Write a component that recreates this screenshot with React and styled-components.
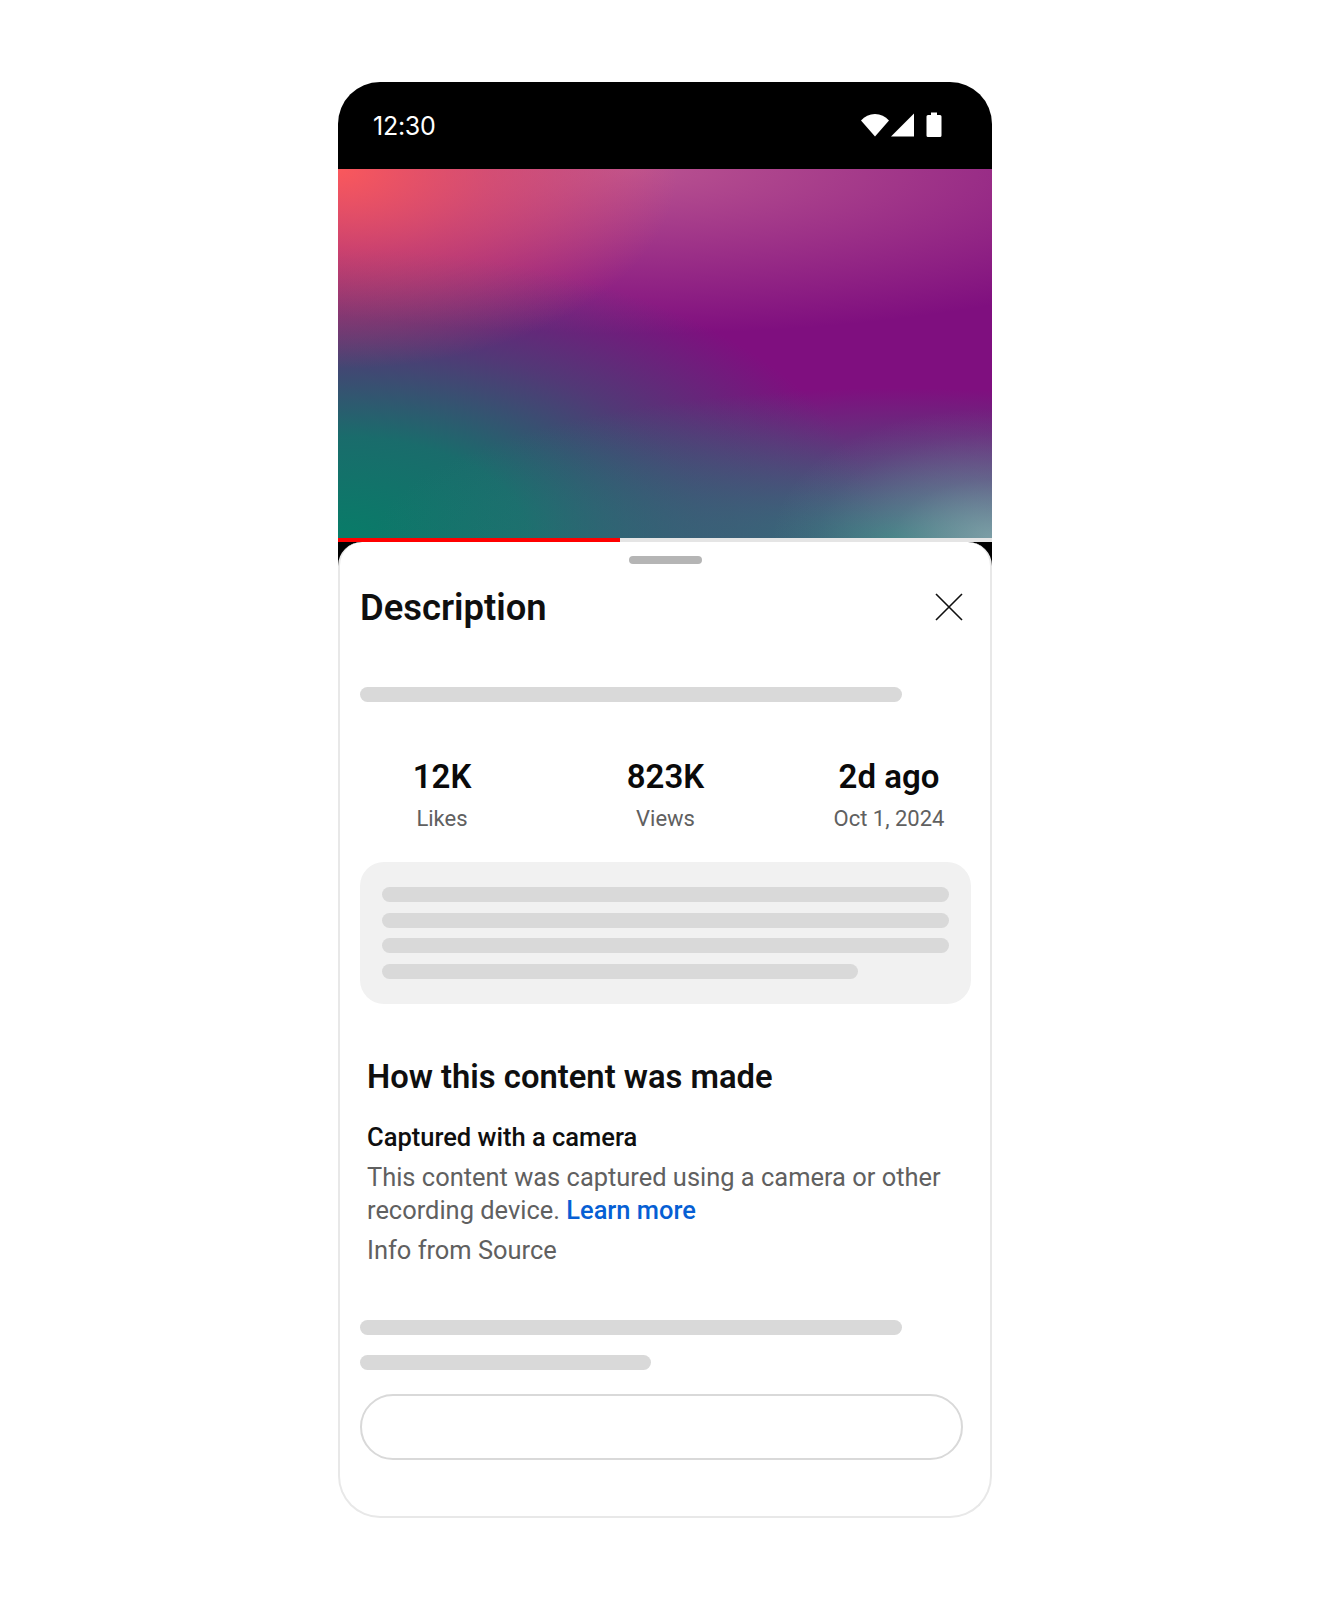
import React from 'react';
import styled, { createGlobalStyle } from 'styled-components';

const GlobalStyle = createGlobalStyle`
  html, body { margin: 0; padding: 0; background: #fff; }
  body { font-family: Roboto, "Liberation Sans", sans-serif; }
  * { box-sizing: border-box; }
`;

const Page = styled.div`
  width: 1331px;
  height: 1600px;
  padding: 82px 0 0 338px;
`;

const Phone = styled.div`
  width: 654px;
  height: 1436px;
  display: flex;
  flex-direction: column;
`;

const StatusBar = styled.div`
  height: 87px;
  flex: none;
  background: #000;
  border-radius: 42px 42px 0 0;
  padding: 0 50px 0 35px;
  display: flex;
  align-items: center;
  justify-content: space-between;
  color: #fff;
`;

const Clock = styled.span`
  font-family: Inter, sans-serif;
  font-size: 25px;
  letter-spacing: -0.25px;
`;

const StatusIcons = styled.div`
  display: flex;
  align-items: center;
  margin-bottom: 2px;
`;

const Video = styled.div`
  height: 369px;
  flex: none;
  background:
    radial-gradient(ellipse 220px 130px at 100% 100%, rgba(165, 200, 195, 0.6) 0%, rgba(165, 200, 195, 0.22) 45%, rgba(165, 200, 195, 0.05) 80%, rgba(165, 200, 195, 0) 100%),
    radial-gradient(ellipse 520px 150px at 85% 100%, rgba(40, 125, 120, 0.9) 0%, rgba(40, 125, 120, 0.45) 50%, rgba(40, 125, 120, 0) 100%),
    radial-gradient(ellipse 340px 200px at 0% 0%, rgba(250, 88, 92, 1) 0%, rgba(250, 88, 92, 0.5) 45%, rgba(250, 88, 92, 0) 100%),
    radial-gradient(ellipse 540px 290px at 0% 100%, rgba(8, 124, 104, 1) 0%, rgba(8, 124, 104, 0.85) 35%, rgba(8, 124, 104, 0.38) 68%, rgba(8, 124, 104, 0) 100%),
    radial-gradient(ellipse 640px 165px at 45% 0%, rgba(205, 105, 150, 0.75), rgba(205, 105, 150, 0) 100%),
    #7f0f7f;
`;

const Progress = styled.div`
  height: 4px;
  flex: none;
  background: #e5e5e5;
`;

const ProgressFill = styled.div`
  height: 100%;
  background: #f00;
`;

// black only shows through the sheet's top corners
const SheetWell = styled.div`
  flex: 1;
  display: flex;
  background: linear-gradient(#000 40px, transparent 40px);
`;

const Sheet = styled.div`
  flex: 1;
  background: #fff;
  border: 2px solid #e8e8e8;
  border-top: 0;
  border-radius: 24px 24px 42px 42px;
  padding: 15px 19px 0 20px;
  display: flex;
  flex-direction: column;
`;

const Handle = styled.div`
  width: 73px;
  height: 8px;
  border-radius: 4px;
  background: #b5b5b5;
  align-self: center;
  flex: none;
  margin-top: -1px;
`;

const SheetHeader = styled.div`
  margin-top: 22px;
  display: flex;
  align-items: center;
  justify-content: space-between;
  height: 44px;
  padding-right: 8px;

  svg {
    margin-bottom: 2px;
  }
`;

const SheetTitle = styled.h2`
  margin: 0;
  font-size: 36.4px;
  font-weight: 650;
  line-height: 44px;
  color: #0f0f0f;
`;

const Bar = styled.div`
  height: 15px;
  border-radius: 7.5px;
  background: #d9d9d9;
  flex: none;
  width: ${p => p.$w};
  margin-top: ${p => p.$top || 0}px;
`;

const Stats = styled.div`
  margin-top: 55px;
  padding: 0 1px;
  display: flex;
  justify-content: space-between;
`;

const Stat = styled.div`
  width: 162px;
  display: flex;
  flex-direction: column;
  align-items: center;
`;

const StatValue = styled.div`
  font-size: 33px;
  font-weight: 650;
  line-height: 40px;
  color: #0a0a0a;
  white-space: nowrap;
`;

const StatLabel = styled.div`
  margin-top: 8px;
  font-size: 22px;
  line-height: 28px;
  color: #606060;
  white-space: nowrap;
`;

const DescBox = styled.div`
  margin-top: 29px;
  height: 142px;
  background: #f1f1f1;
  border-radius: 24px;
  padding: 25px 22px 0;
  display: flex;
  flex-direction: column;
  gap: 10.6px;
`;

const Section = styled.section`
  margin-top: 51px;
  padding-left: 7px;
`;

const SectionTitle = styled.h3`
  margin: 0;
  font-size: 32.75px;
  font-weight: 600;
  line-height: 44px;
  color: #0f0f0f;
`;

const SubTitle = styled.div`
  margin-top: 22px;
  font-size: 25.5px;
  font-weight: 500;
  line-height: 32px;
  color: #0f0f0f;
`;

const Body = styled.p`
  margin: ${p => p.$top || 0}px 0 0;
  font-size: 25.45px;
  line-height: 32.6px;
  color: #606060;
`;

const LearnMore = styled.a`
  color: #065fd4;
  font-weight: 500;
  text-decoration: none;
`;

const PillButton = styled.div`
  margin-top: 24px;
  width: 603px;
  height: 66px;
  border: 2px solid #d9d9d9;
  border-radius: 33px;
  flex: none;
`;

const WifiIcon = () => (
  <svg width="30" height="24" viewBox="0 0 30 24">
    <path d="M1 7.5C4.6 3.2 9.5 1 15 1s10.4 2.2 14 6.5L15 23.5z" fill="#fff" />
  </svg>
);

const SignalIcon = () => (
  <svg width="25" height="24" viewBox="0 0 25 24">
    <path d="M24 0.5V23.5H1z" fill="#fff" />
  </svg>
);

const BatteryIcon = () => (
  <svg width="16" height="25" viewBox="0 0 16 25" style={{ marginLeft: 11 }}>
    <path d="M5 0.5h6V3h3a1.5 1.5 0 0 1 1.5 1.5v19A1.5 1.5 0 0 1 14 25H2a1.5 1.5 0 0 1-1.5-1.5v-19A1.5 1.5 0 0 1 2 3h3z" fill="#fff" />
  </svg>
);

const CloseIcon = () => (
  <svg width="28" height="28" viewBox="0 0 28 28">
    <path d="M1 1l26 26M27 1L1 27" stroke="#0f0f0f" strokeWidth="1.6" fill="none" />
  </svg>
);

const stats = [
  { value: '12K', label: 'Likes' },
  { value: '823K', label: 'Views' },
  { value: '2d ago', label: 'Oct 1, 2024' },
];

export default function App() {
  return (
    <>
      <GlobalStyle />
      <Page>
        <Phone>
          <StatusBar>
            <Clock>12:30</Clock>
            <StatusIcons>
              <WifiIcon />
              <SignalIcon />
              <BatteryIcon />
            </StatusIcons>
          </StatusBar>
          <Video />
          <Progress>
            <ProgressFill style={{ width: `${(282 / 654) * 100}%` }} />
          </Progress>
          <SheetWell>
            <Sheet>
              <Handle />
              <SheetHeader>
                <SheetTitle>Description</SheetTitle>
                <CloseIcon />
              </SheetHeader>
              <Bar $w="542px" $top={57} />
              <Stats>
                {stats.map(s => (
                  <Stat key={s.value}>
                    <StatValue>{s.value}</StatValue>
                    <StatLabel>{s.label}</StatLabel>
                  </Stat>
                ))}
              </Stats>
              <DescBox>
                <Bar $w="100%" />
                <Bar $w="100%" />
                <Bar $w="100%" />
                <Bar $w="476px" />
              </DescBox>
              <Section>
                <SectionTitle>How this content was made</SectionTitle>
                <SubTitle>Captured with a camera</SubTitle>
                <Body $top={8}>
                  This content was captured using a camera or other recording device.{' '}
                  <LearnMore>Learn more</LearnMore>
                </Body>
                <Body $top={8}>Info from Source</Body>
              </Section>
              <Bar $w="542px" $top={53} />
              <Bar $w="291px" $top={20} />
              <PillButton />
            </Sheet>
          </SheetWell>
        </Phone>
      </Page>
    </>
  );
}
